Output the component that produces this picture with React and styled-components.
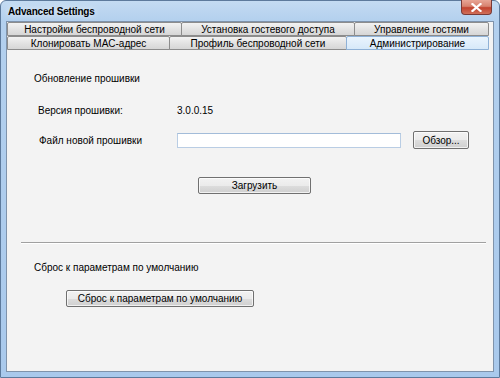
import React from 'react';
import styled, { createGlobalStyle } from 'styled-components';

const GlobalStyle = createGlobalStyle`
  html, body {
    margin: 0;
    padding: 0;
    background: #ffffff;
  }
  body {
    font-family: "Liberation Sans", Arial, sans-serif;
    font-size: 10px;
    color: #000;
  }
`;

const topTabs = [
  { label: 'Настройки беспроводной сети', width: 175 },
  { label: 'Установка гостевого доступа', width: 174 },
  { label: 'Управление гостями', width: 135 },
];

const bottomTabs = [
  { label: 'Клонировать MAC-адрес', width: 163 },
  { label: 'Профиль беспроводной сети', width: 178 },
  { label: 'Администрирование', width: 143, active: true },
];

function App() {
  return (
    <>
      <GlobalStyle />
      <Window>
        <TitleBar>
          <Title>Advanced Settings</Title>
          <CloseButton>
            <svg width="11" height="9" viewBox="0 0 11 9">
              <path d="M1.5 1 L9.5 8 M9.5 1 L1.5 8" stroke="#fff" strokeWidth="2.2" strokeLinecap="square" />
            </svg>
          </CloseButton>
        </TitleBar>
        <Client>
          <TabRow>
            {topTabs.map(t => (
              <Tab key={t.label} width={t.width}>{t.label}</Tab>
            ))}
          </TabRow>
          <TabRow>
            {bottomTabs.map(t => (
              <Tab key={t.label} width={t.width} active={t.active}>{t.label}</Tab>
            ))}
          </TabRow>
          <Panel>
            <Heading>Обновление прошивки</Heading>
            <FieldRow top={17} indent={31}>
              <FieldLabel width={139}>Версия прошивки:</FieldLabel>
              <span>3.0.0.15</span>
            </FieldRow>
            <FieldRow top={14} indent={32}>
              <FieldLabel width={138}>Файл новой прошивки</FieldLabel>
              <FileInput type="text" />
              <Button width={56} height={18} gap={12}>Обзор...</Button>
            </FieldRow>
            <ButtonRow top={28} indent={191}>
              <Button width={113} height={17}>Загрузить</Button>
            </ButtonRow>
            <Separator />
            <Heading top={17}>Сброс к параметрам по умолчанию</Heading>
            <ButtonRow top={15} indent={59}>
              <Button width={188} height={17}>Сброс к параметрам по умолчанию</Button>
            </ButtonRow>
          </Panel>
        </Client>
      </Window>
    </>
  );
}

export default App;

const Window = styled.div`
  box-sizing: border-box;
  width: 500px;
  height: 378px;
  display: flex;
  flex-direction: column;
  border: 1px solid #5d7a9c;
  border-radius: 6px 6px 0 0;
  background: linear-gradient(180deg, #c4dbf2 0px, #b3d0ee 20px, #a9c9ec 100%);
  padding: 0 5px 5px 5px;
`;

const TitleBar = styled.div`
  position: relative;
  height: 20px;
  display: flex;
  align-items: center;
  padding-left: 2px;
`;

const Title = styled.div`
  font-family: "Liberation Sans", Arial, sans-serif;
  font-weight: bold;
  font-size: 10px;
  letter-spacing: -0.2px;
  color: #000;
  text-shadow: 0 0 6px rgba(255, 255, 255, 0.9);
  margin-top: 1px;
`;

const CloseButton = styled.div`
  position: absolute;
  right: 2px;
  top: -1px;
  width: 31px;
  height: 15px;
  box-sizing: border-box;
  border: 1px solid #7a3a36;
  border-top: none;
  border-radius: 0 0 4px 4px;
  background: linear-gradient(180deg, #e8a696 0%, #d7826f 45%, #c2432f 55%, #d0705a 100%);
  display: flex;
  align-items: center;
  justify-content: center;
`;

const Client = styled.div`
  flex: 1;
  display: flex;
  flex-direction: column;
  border: 1px solid #7f93ab;
  background: #f3f3f3;
`;

const TabRow = styled.div`
  display: flex;
  height: 14px;
  background: #f3f3f3;
`;

const Tab = styled.div`
  box-sizing: border-box;
  width: ${p => p.width}px;
  height: 14px;
  display: flex;
  align-items: center;
  justify-content: center;
  border: 1px solid ${p => (p.active ? '#8fb1d6' : '#8c8c8c')};
  margin-right: -1px;
  border-radius: 2px 2px 0 0;
  background: ${p =>
    p.active
      ? 'linear-gradient(180deg, #eaf4fd 0%, #d7e9f9 100%)'
      : 'linear-gradient(180deg, #f2f2f2 0%, #e3e3e3 50%, #d6d6d6 100%)'};
  font-size: 10px;
  white-space: nowrap;
  color: #000;
`;

const Panel = styled.div`
  flex: 1;
  display: flex;
  flex-direction: column;
  padding-top: 22px;
  background: #f3f3f3;
`;

const Heading = styled.div`
  height: 14px;
  line-height: 14px;
  padding-left: 27px;
  margin-top: ${p => p.top || 0}px;
`;

const FieldRow = styled.div`
  display: flex;
  align-items: center;
  min-height: 14px;
  margin-top: ${p => p.top}px;
  padding-left: ${p => p.indent}px;
`;

const FieldLabel = styled.span`
  width: ${p => p.width}px;
  flex-shrink: 0;
`;

const FileInput = styled.input`
  box-sizing: border-box;
  width: 224px;
  height: 15px;
  margin: 0;
  padding: 0 2px;
  border: 1px solid #b9cde4;
  border-top-color: #a3bcd9;
  background: #fff;
  outline: none;
`;

const ButtonRow = styled.div`
  display: flex;
  margin-top: ${p => p.top}px;
  padding-left: ${p => p.indent}px;
`;

const Button = styled.button`
  box-sizing: border-box;
  width: ${p => p.width}px;
  height: ${p => p.height}px;
  margin: 0 0 0 ${p => p.gap || 0}px;
  padding: 0;
  border: 1px solid #707070;
  border-radius: 2px;
  background: linear-gradient(180deg, #f2f2f2 0%, #ebebeb 50%, #dddddd 51%, #cfcfcf 100%);
  box-shadow: inset 0 0 0 1px rgba(255, 255, 255, 0.7);
  font-family: "Liberation Sans", Arial, sans-serif;
  font-size: 10px;
  color: #000;
  display: flex;
  align-items: center;
  justify-content: center;
  white-space: nowrap;
`;

const Separator = styled.div`
  margin: 48px 7px 0 14px;
  height: 1px;
  background: #a0a0a0;
  border-bottom: 1px solid #ffffff;
`;
